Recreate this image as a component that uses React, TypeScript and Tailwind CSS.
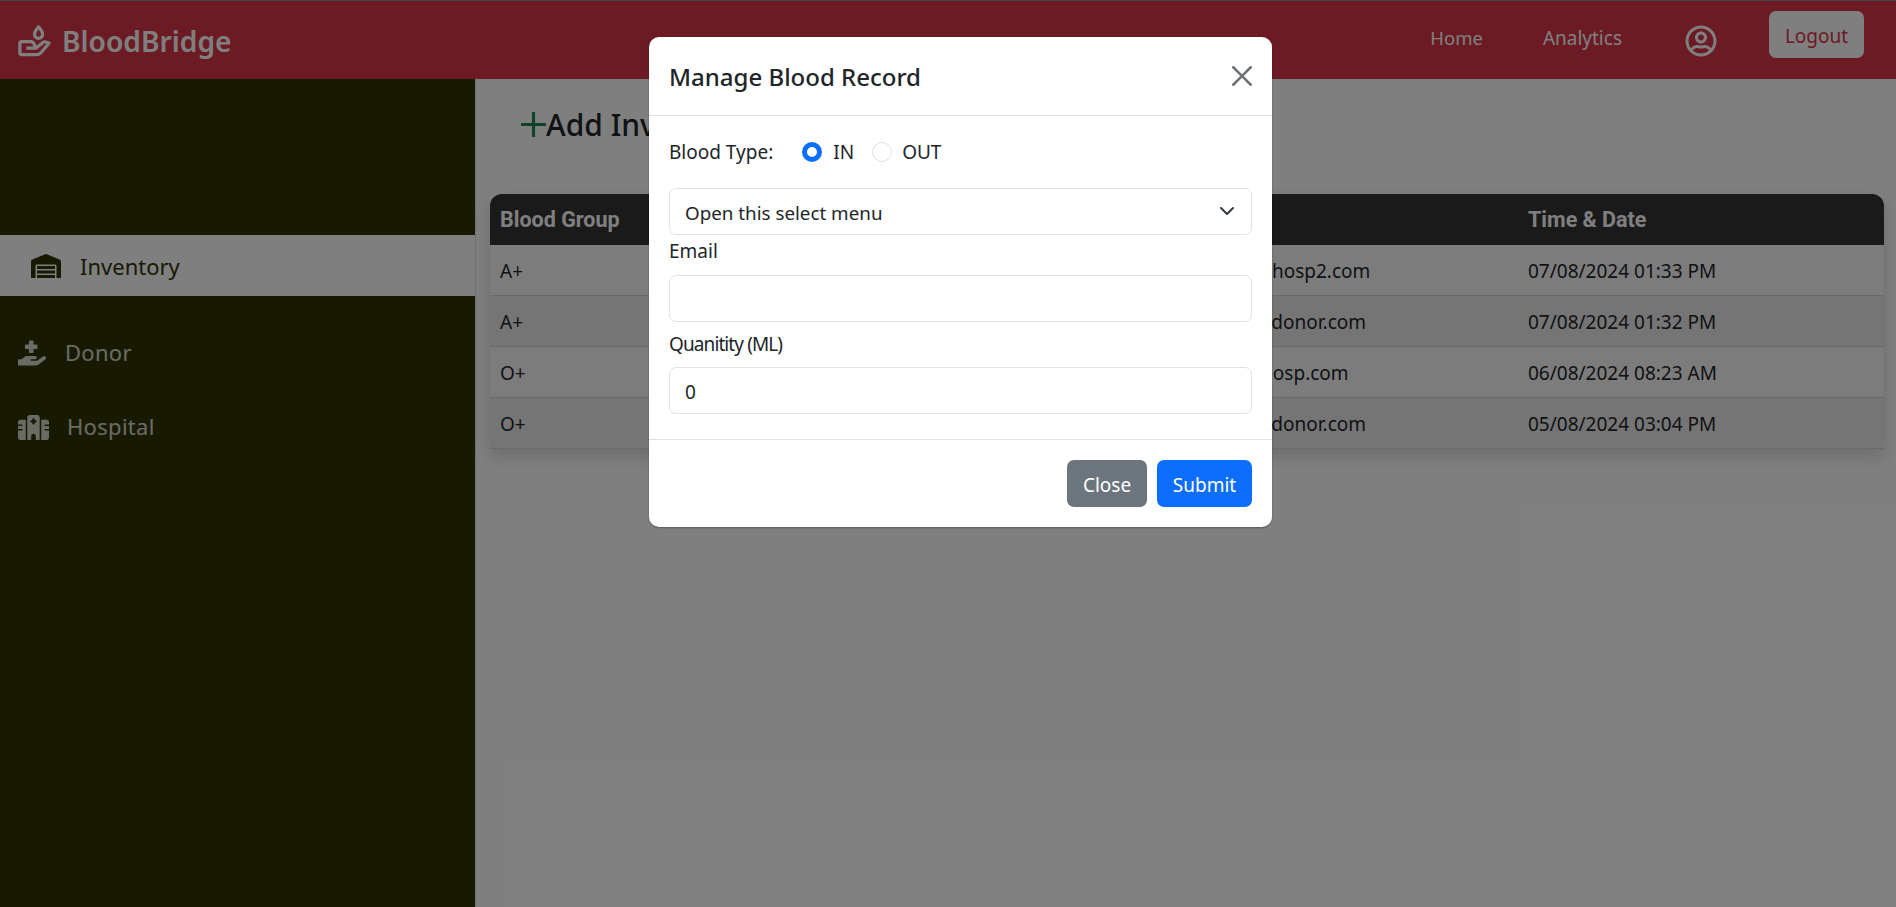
import { BiDonateBlood } from 'react-icons/bi';
import { FaRegUserCircle, FaWarehouse, FaHandHoldingMedical } from 'react-icons/fa';
import { FaHospital } from 'react-icons/fa6';

const font = "font-['Noto_Sans','Open_Sans',sans-serif]";

const rows = [
  { group: 'A+', type: 'OUT', qty: '100', email: 'hosp2@hosp2.com', date: '07/08/2024 01:33 PM' },
  { group: 'A+', type: 'IN', qty: '200', email: 'donor@donor.com', date: '07/08/2024 01:32 PM' },
  { group: 'O+', type: 'OUT', qty: '100', email: 'hosp@hosp.com', date: '06/08/2024 08:23 AM' },
  { group: 'O+', type: 'IN', qty: '300', email: 'donor@donor.com', date: '05/08/2024 03:04 PM' },
];

export default function App() {
  return (
    <div className={`${font} relative h-[907px] overflow-hidden bg-white text-[19px] text-[#212529]`}>
      {/* Navbar */}
      <nav className="flex h-[79px] items-start justify-between border-t border-[#8a8a8a] bg-[#d83648] pl-[15px] pr-[32px]">
        <div className="flex h-[80px] items-center gap-[8px]">
          <BiDonateBlood className="text-[39px] text-white" />
          <span className="text-[28.2px] font-semibold text-white">BloodBridge</span>
        </div>
        <div className="flex items-start">
          <a className="mt-[23px] text-[18.5px] text-white">Home</a>
          <a className="ml-[60px] mt-[23px] text-[19px] text-white">Analytics</a>
          <FaRegUserCircle className="ml-[63px] mt-[24px] text-[32px] text-white" />
          <button className="ml-[52px] mt-[10px] h-[47px] w-[95px] rounded-[7px] bg-white pt-[3px] text-[19px] text-[#d83648]">Logout</button>
        </div>
      </nav>

      <div className="flex h-[828px]">
        {/* Sidebar */}
        <aside className="w-[475px] shrink-0 bg-[#303400] pt-[156px] text-[22px] text-white/80">
          <div className="flex h-[61px] items-center gap-[19px] bg-white pl-[31px] text-[#303400]">
            <FaWarehouse className="text-[30px]" />
            <span className="pt-[2px]">Inventory</span>
          </div>
          <div className="mt-[26px] flex h-[62px] items-center gap-[19px] pl-[18px]">
            <FaHandHoldingMedical className="text-[28px]" />
            <span className="pb-[2px] tracking-[0.3px]">Donor</span>
          </div>
          <div className="mt-[12px] flex h-[62px] items-center gap-[18px] pl-[18px]">
            <FaHospital className="text-[31px]" />
            <span className="pb-[2px] tracking-[0.3px]">Hospital</span>
          </div>
        </aside>

        {/* Main */}
        <main className="flex-1 border-l border-[#e2e2e2] pl-[14px] pr-[12px] pt-[115px]">
          <h4 className="absolute left-[521px] top-[102px] flex items-center text-[30px] font-medium">
            <svg viewBox="0 0 24 24" className="h-[25px] w-[25px] text-[#198754]" stroke="currentColor" strokeWidth="3">
              <path d="M12 0v24M0 12h24" />
            </svg>
            <span>Add Inventory</span>
          </h4>
          <table className="w-full border-separate border-spacing-0 shadow-[0_8px_16px_rgba(0,0,0,0.15)]">
            <thead>
              <tr className="h-[51px] text-left font-['Roboto',sans-serif] text-[21.5px] font-bold text-white">
                <th className="w-[279px] rounded-tl-[12px] bg-[#343434] pl-[10px] pt-[2px]">Blood Group</th>
                <th className="w-[280px] bg-[#343434] pl-[11px] pt-[2px]">Inventory Type</th>
                <th className="w-[140px] bg-[#343434] pl-[11px] pt-[2px]">Quantity</th>
                <th className="w-[328px] bg-[#343434] pl-[11px] pt-[2px]">Email</th>
                <th className="rounded-tr-[12px] bg-[#343434] pl-[11px] pt-[2px]">Time &amp; Date</th>
              </tr>
            </thead>
            <tbody>
              {rows.map((r, i) => (
                <tr key={i} className={`h-[51px] ${i % 2 === 0 ? 'bg-[#f9f9f9]' : 'bg-[#ebebeb]'}`}>
                  <td className="border-b border-[#d5d5d5] pl-[10px] pt-[2px]">{r.group}</td>
                  <td className="border-b border-[#d5d5d5] pl-[11px] pt-[2px]">{r.type}</td>
                  <td className="border-b border-[#d5d5d5] pl-[11px] pt-[2px]">{r.qty}</td>
                  <td className="border-b border-[#d5d5d5] pl-[11px] pt-[2px]">{r.email}</td>
                  <td className="border-b border-[#d5d5d5] pl-[11px] pt-[2px]">{r.date}</td>
                </tr>
              ))}
            </tbody>
          </table>
        </main>
      </div>

      {/* Backdrop */}
      <div className="absolute inset-0 bg-black/50" />

      {/* Modal */}
      <div className="absolute left-[649px] top-[37px] w-[623px] rounded-[10px] bg-white shadow-[0_1px_2px_rgba(0,0,0,0.3)]">
        <div className="flex h-[79px] items-center justify-between border-b border-[#dee2e6] px-[20px]">
          <h5 className="pt-[1px] text-[24px] font-medium">Manage Blood Record</h5>
          <svg viewBox="0 0 16 16" className="h-[20px] w-[20px] text-[#6f7274]" fill="currentColor">
            <path d="M.293.293a1 1 0 0 1 1.414 0L8 6.586 14.293.293a1 1 0 1 1 1.414 1.414L9.414 8l6.293 6.293a1 1 0 0 1-1.414 1.414L8 9.414l-6.293 6.293a1 1 0 0 1-1.414-1.414L6.586 8 .293 1.707a1 1 0 0 1 0-1.414z" />
          </svg>
        </div>
        <div className="px-[20px] pb-[25px] pt-[21px]">
          <div className="flex h-[30px] items-center">
            <span className="pt-[1px]">Blood Type:</span>
            <span className="ml-[29px] box-border h-[20px] w-[20px] rounded-full border-[5.5px] border-[#0d6efd] bg-white" />
            <span className="ml-[11px] pt-[1px]">IN</span>
            <span className="ml-[18px] box-border h-[20px] w-[20px] rounded-full border border-[#dee2e6] bg-white" />
            <span className="ml-[10px] pt-[1px]">OUT</span>
          </div>
          <div className="relative mt-[21px]">
            <div className="flex h-[47px] items-center rounded-[7px] border border-[#dee2e6] pl-[15px] pt-[3px] text-[18.8px]">Open this select menu</div>
            <svg viewBox="0 0 16 16" className="absolute right-[17px] top-[15px] h-[16px] w-[16px]" fill="none" stroke="#343a40" strokeWidth="2" strokeLinecap="round" strokeLinejoin="round">
              <path d="m2 5 6 6 6-6" />
            </svg>
          </div>
          <label className="block h-[40px] leading-[32px]">Email</label>
          <input className="block h-[47px] w-full rounded-[7px] border border-[#dee2e6] px-[15px]" />
          <label className="mt-[5px] block h-[40px] leading-[34px] tracking-[-0.9px]">Quanitity (ML)</label>
          <input className="block h-[47px] w-full rounded-[7px] border border-[#dee2e6] px-[15px] pt-[2px]" defaultValue="0" />
        </div>
        <div className="flex h-[88px] items-center justify-end gap-[10px] border-t border-[#dee2e6] px-[20px]">
          <button className="h-[47px] w-[80px] rounded-[7px] bg-[#6c757d] pt-[3px] text-white">Close</button>
          <button className="h-[47px] w-[95px] rounded-[7px] bg-[#0d6efd] pt-[3px] text-white">Submit</button>
        </div>
      </div>
    </div>
  );
}
